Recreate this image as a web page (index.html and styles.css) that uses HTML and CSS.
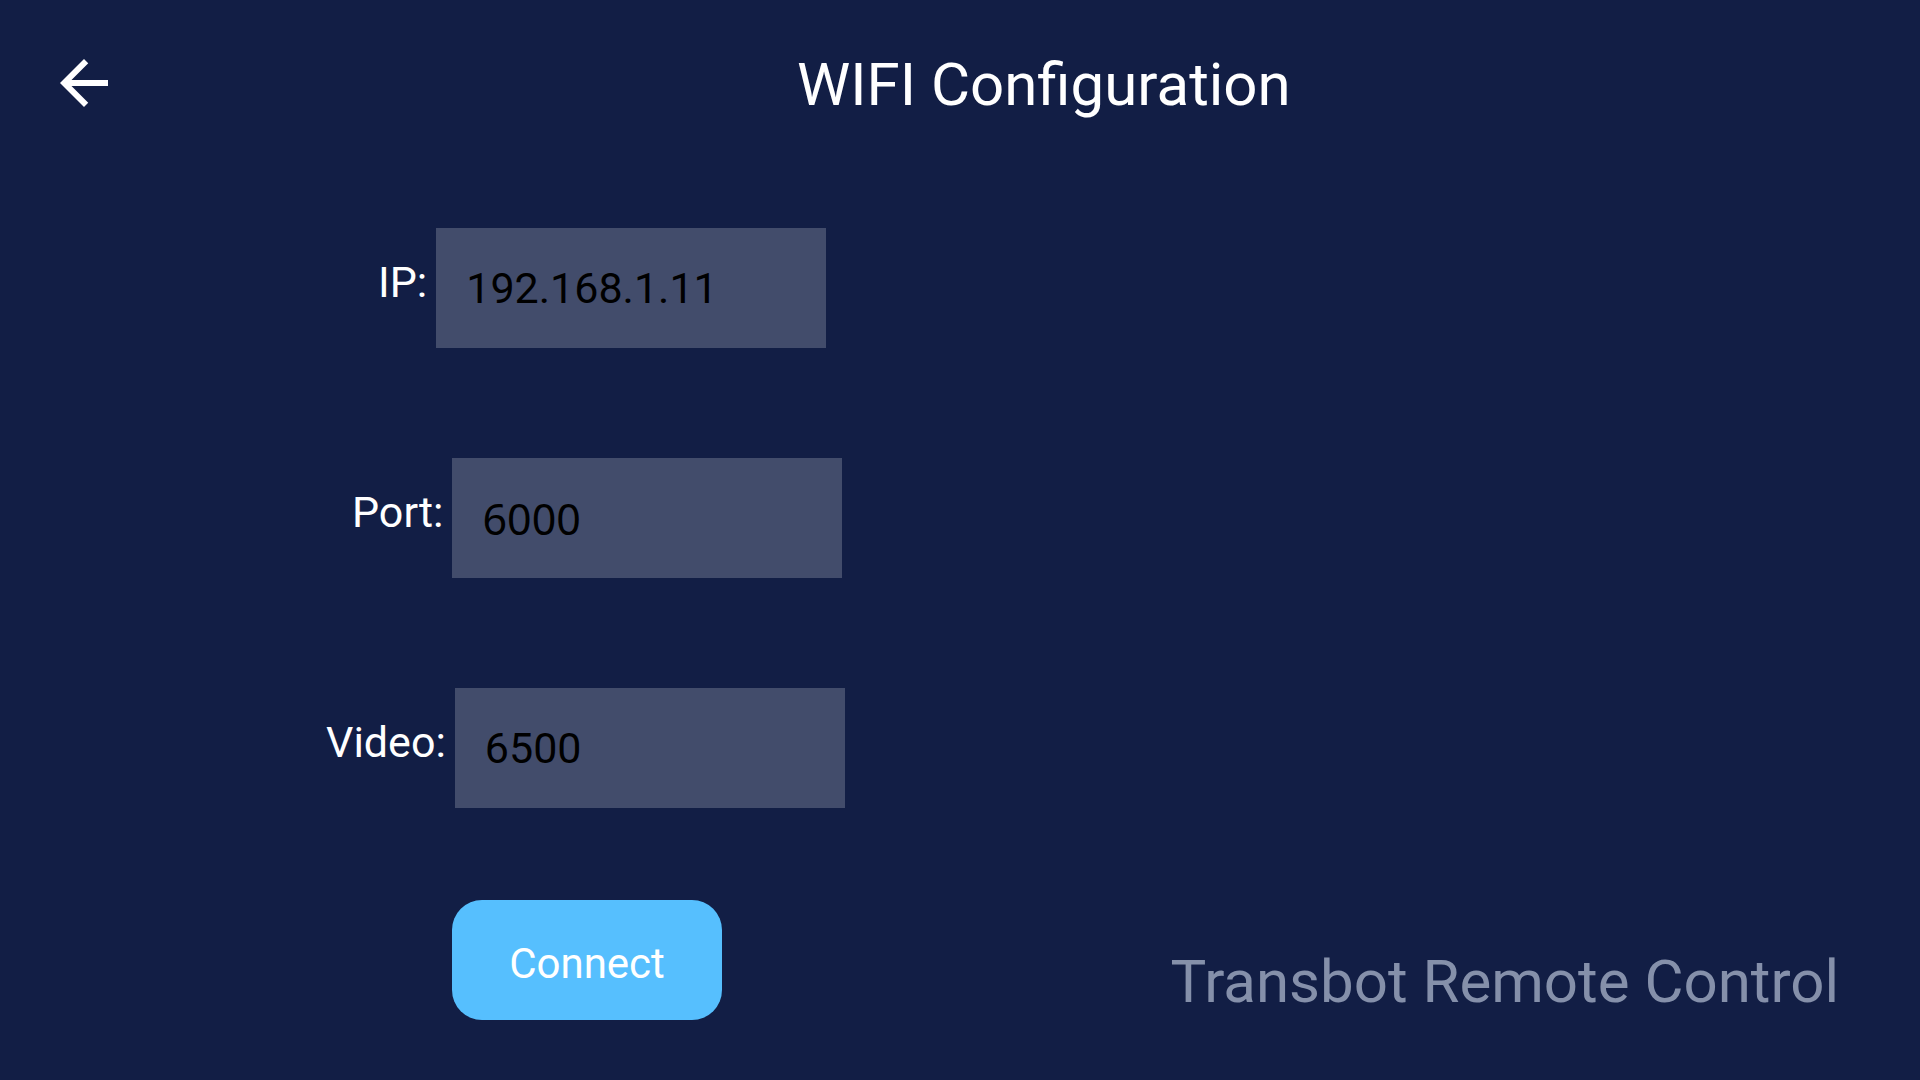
FILE: index.html
```html
<!DOCTYPE html>
<html lang="en">
<head>
  <meta charset="UTF-8" />
  <title>WIFI Configuration</title>
  <link rel="stylesheet" href="styles.css">
</head>
<body>
  <div class="topbar">
    <svg class="back" viewBox="0 0 24 24"><path d="M20 11H7.83l5.59-5.59L12 4l-8 8 8 8 1.41-1.41L7.83 13H20v-2z" fill="#fff"/></svg>
    <div class="title">WIFI Configuration</div>
  </div>

  <div class="form">
    <div class="row row-ip">
      <label class="label">IP:</label>
      <input class="field" type="text" value="192.168.1.11" />
    </div>
    <div class="row row-port">
      <label class="label">Port:</label>
      <input class="field field-alt" type="text" value="6000" />
    </div>
    <div class="row row-video">
      <label class="label">Video:</label>
      <input class="field" type="text" value="6500" />
    </div>
  </div>

  <div class="actions">
    <button class="connect">Connect</button>
    <div class="brand">Transbot Remote Control</div>
  </div>
</body>
</html>
```

FILE: styles.css
```css
body {
  margin: 0;
  width: 1920px;
  height: 1080px;
  overflow: hidden;
  background: #121e45;
  color: #fff;
  font-family: Roboto, "Liberation Sans", sans-serif;
}
.topbar {
  display: flex;
  align-items: flex-start;
  height: 228px;
}
.back {
  width: 72px;
  height: 72px;
  margin: 47px 0 0 48px;
}
.title {
  font-size: 60px;
  line-height: 1;
  margin: 55px 0 0 677px;
}
.form {
  display: flex;
  flex-direction: column;
  gap: 110px;
}
.row {
  display: flex;
  align-items: flex-start;
  height: 120px;
}
.row-ip { padding-left: 378px; }
.row-port { padding-left: 352px; }
.row-video { padding-left: 326px; }
.label {
  font-size: 43px;
  line-height: 1;
  margin-top: 33px;
  margin-right: 9px;
}
.field {
  width: 390px;
  height: 120px;
  box-sizing: border-box;
  padding: 0 0 0 30px;
  border: none;
  border-radius: 0;
  outline: none;
  background: #424c6b;
  color: #000;
  font-family: Roboto, "Liberation Sans", sans-serif;
  font-size: 43px;
}
.field-alt {
  font-family: "Noto Sans", Roboto, sans-serif;
}
.actions {
  display: flex;
  align-items: flex-start;
  margin-top: 92px;
  padding-left: 452px;
}
.connect {
  width: 270px;
  height: 120px;
  padding: 6px 0 0;
  border: none;
  border-radius: 30px;
  background: #56bffe;
  color: #fff;
  font-family: Roboto, "Liberation Sans", sans-serif;
  font-size: 42px;
}
.brand {
  margin: 52px 81px 0 auto;
  font-size: 60px;
  line-height: 1;
  color: #8590aa;
}
```
